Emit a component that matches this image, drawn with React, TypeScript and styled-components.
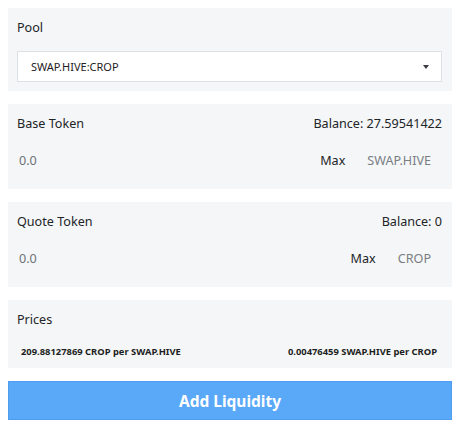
import styled, { createGlobalStyle } from "styled-components";

const GlobalStyle = createGlobalStyle`
  body {
    margin: 8px;
    background: #ffffff;
    font-family: "Noto Sans", "Liberation Sans", sans-serif;
    color: #222427;
  }
`;

const Wrapper = styled.div`
  display: flex;
  flex-direction: column;
  gap: 13px;
`;

const Panel = styled.div<{ $pb?: number }>`
  background: #f4f6f8;
  padding: 10px 10px ${(p) => p.$pb ?? 10}px 9px;
  display: flex;
  flex-direction: column;
`;

const HeaderRow = styled.div`
  display: flex;
  justify-content: space-between;
  align-items: center;
  height: 20px;
  font-size: 12.6px;
  line-height: 20px;
`;

const Label = styled.span`
  color: #222427;
`;

const Select = styled.div`
  margin-top: 13px;
  height: 31px;
  box-sizing: border-box;
  background: #ffffff;
  border: 1px solid #dde1e5;
  display: flex;
  align-items: center;
  justify-content: space-between;
  padding: 0 12px 0 13px;
  font-size: 11px;
  color: #1f2124;
`;

const Caret = styled.span`
  width: 0;
  height: 0;
  border-left: 3.5px solid transparent;
  border-right: 3.5px solid transparent;
  border-top: 4px solid #3a3d41;
`;

const InputRow = styled.div`
  margin-top: 8px;
  height: 36px;
  display: flex;
  align-items: center;
  font-size: 12.6px;
`;

const Amount = styled.input`
  flex: 1;
  min-width: 0;
  border: none;
  background: transparent;
  font: inherit;
  padding: 0 0 0 2px;
  outline: none;
  &::placeholder {
    color: #6e7277;
  }
`;

const MaxButton = styled.span`
  color: #222427;
  margin-right: 22px;
`;

const TokenName = styled.span`
  color: #7a7e83;
  margin-right: 11px;
`;

const PriceRow = styled.div`
  margin-top: 13px;
  height: 16px;
  display: flex;
  justify-content: space-between;
  align-items: center;
  padding: 0 5px 0 4px;
  font-size: 9.4px;
  font-weight: 700;
  color: #1c1e21;
`;

const AddButton = styled.button`
  height: 39px;
  border: 1px solid #4f9df0;
  background: #5aa8f8;
  color: #ffffff;
  font-family: inherit;
  font-size: 15.5px;
  font-weight: 700;
  cursor: pointer;
`;

function TokenPanel({ label, balance, token }: { label: string; balance: string; token: string }) {
  return (
    <Panel $pb={11}>
      <HeaderRow>
        <Label>{label}</Label>
        <Label>Balance: {balance}</Label>
      </HeaderRow>
      <InputRow>
        <Amount placeholder="0.0" />
        <MaxButton>Max</MaxButton>
        <TokenName>{token}</TokenName>
      </InputRow>
    </Panel>
  );
}

export default function App() {
  return (
    <>
      <GlobalStyle />
      <Wrapper>
        <Panel $pb={9}>
          <HeaderRow>
            <Label>Pool</Label>
          </HeaderRow>
          <Select>
            <span>SWAP.HIVE:CROP</span>
            <Caret />
          </Select>
        </Panel>
        <TokenPanel label="Base Token" balance="27.59541422" token="SWAP.HIVE" />
        <TokenPanel label="Quote Token" balance="0" token="CROP" />
        <Panel $pb={9}>
          <HeaderRow>
            <Label>Prices</Label>
          </HeaderRow>
          <PriceRow>
            <span>209.88127869 CROP per SWAP.HIVE</span>
            <span>0.00476459 SWAP.HIVE per CROP</span>
          </PriceRow>
        </Panel>
        <AddButton>Add Liquidity</AddButton>
      </Wrapper>
    </>
  );
}
